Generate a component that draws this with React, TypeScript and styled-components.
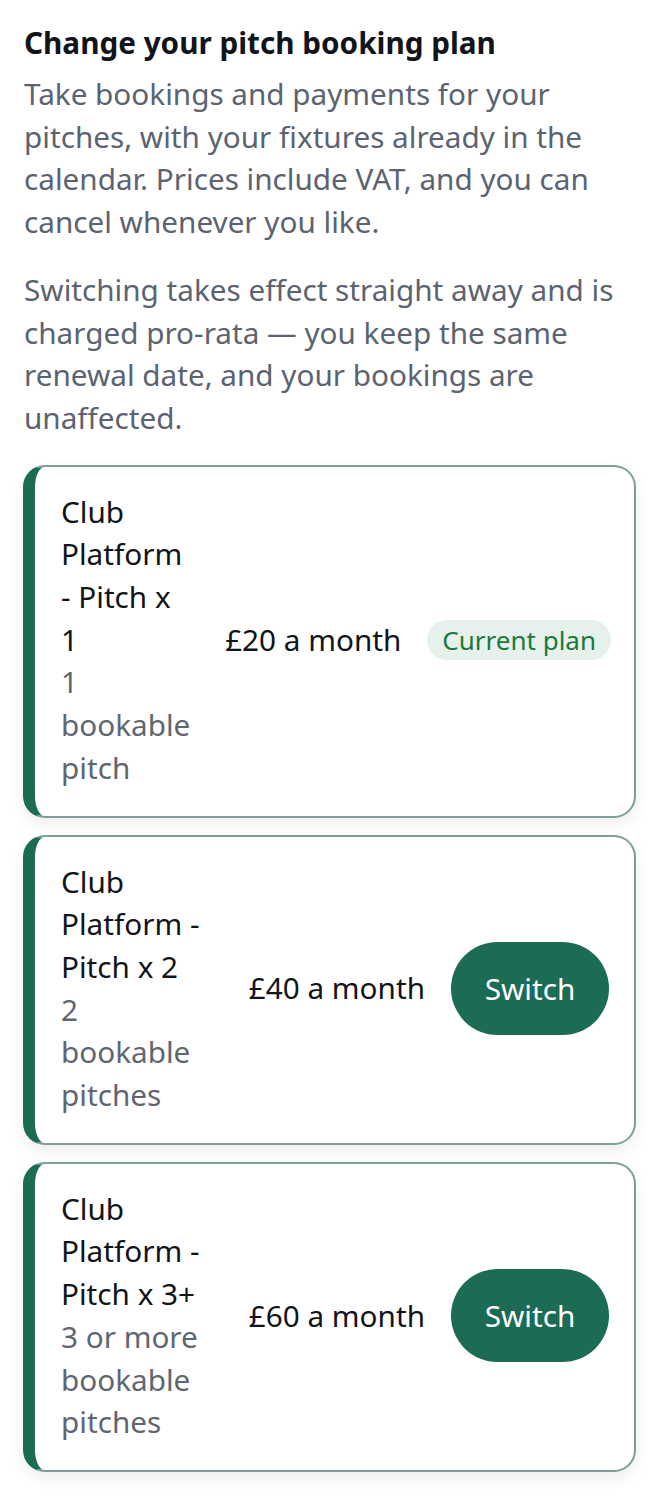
import React from "react";
import styled, { createGlobalStyle } from "styled-components";

const GlobalStyle = createGlobalStyle`
  html, body { margin: 0; padding: 0; background: #ffffff; }
  body { font-family: "Noto Sans", "Open Sans", sans-serif; -webkit-font-smoothing: antialiased; }
  * { box-sizing: border-box; }
`;

const Page = styled.main`
  padding: 24px 24px 25px 23px;
  font-size: 29.7px;
  line-height: 42.7px;
  color: #111418;
`;

const Title = styled.h2`
  margin: 0 0 0 1px;
  font-size: 29.7px;
  line-height: 37px;
  font-weight: 700;
  color: #111418;
`;

const Lead = styled.p<{ $spaced?: boolean }>`
  margin: ${(p) => (p.$spaced ? "25px 0 0 1px" : "12px 0 0 1px")};
  color: #5b6370;
  font-size: 29.7px;
  line-height: 42.7px;
`;

const PlanList = styled.div`
  margin-top: 25px;
  display: flex;
  flex-direction: column;
  gap: 17px;
`;

const Card = styled.section`
  display: flex;
  align-items: center;
  gap: 26px;
  padding: 24px 23px 26px 26px;
  background: #ffffff;
  border: 2px solid #7d9e9b;
  border-left: 12px solid #1b6b55;
  border-radius: 22px;
  box-shadow: 0 6px 14px rgba(20, 40, 35, 0.08);
`;

const Info = styled.div`
  flex: 1 1 0;
  min-width: 0;
  padding-right: 12px;
`;

const PlanName = styled.div`
  color: #111418;
`;

const PlanDesc = styled.div`
  color: #5f6670;
`;

const Price = styled.div`
  flex: none;
  white-space: nowrap;
  color: #111418;
`;

const Badge = styled.span`
  flex: none;
  display: inline-flex;
  align-items: center;
  height: 40px;
  padding: 0 15px;
  border-radius: 999px;
  background: #e7f1ec;
  color: #1a7a3c;
  font-size: 26px;
  line-height: 1;
  white-space: nowrap;
`;

const SwitchButton = styled.button`
  flex: none;
  width: 158px;
  height: 93px;
  margin-right: 2px;
  border: none;
  border-radius: 999px;
  background: #1b6b55;
  color: #ffffff;
  font-family: inherit;
  font-size: 29.7px;
  line-height: 1;
  cursor: pointer;
`;

type Plan = { name: string; desc: string; price: string; current?: boolean };

const plans: Plan[] = [
  { name: "Club Platform - Pitch x 1", desc: "1 bookable pitch", price: "£20 a month", current: true },
  { name: "Club Platform - Pitch x 2", desc: "2 bookable pitches", price: "£40 a month" },
  { name: "Club Platform - Pitch x 3+", desc: "3 or more bookable pitches", price: "£60 a month" },
];

export default function App() {
  return (
    <>
      <GlobalStyle />
      <Page>
        <Title>Change your pitch booking plan</Title>
        <Lead>
          Take bookings and payments for your pitches, with your fixtures already in the calendar. Prices include
          VAT, and you can cancel whenever you like.
        </Lead>
        <Lead $spaced>
          Switching takes effect straight away and is charged pro-rata — you keep the same renewal date, and your
          bookings are unaffected.
        </Lead>
        <PlanList>
          {plans.map((p) => (
            <Card key={p.name}>
              <Info>
                <PlanName>{p.name}</PlanName>
                <PlanDesc>{p.desc}</PlanDesc>
              </Info>
              <Price>{p.price}</Price>
              {p.current ? <Badge>Current plan</Badge> : <SwitchButton>Switch</SwitchButton>}
            </Card>
          ))}
        </PlanList>
      </Page>
    </>
  );
}
